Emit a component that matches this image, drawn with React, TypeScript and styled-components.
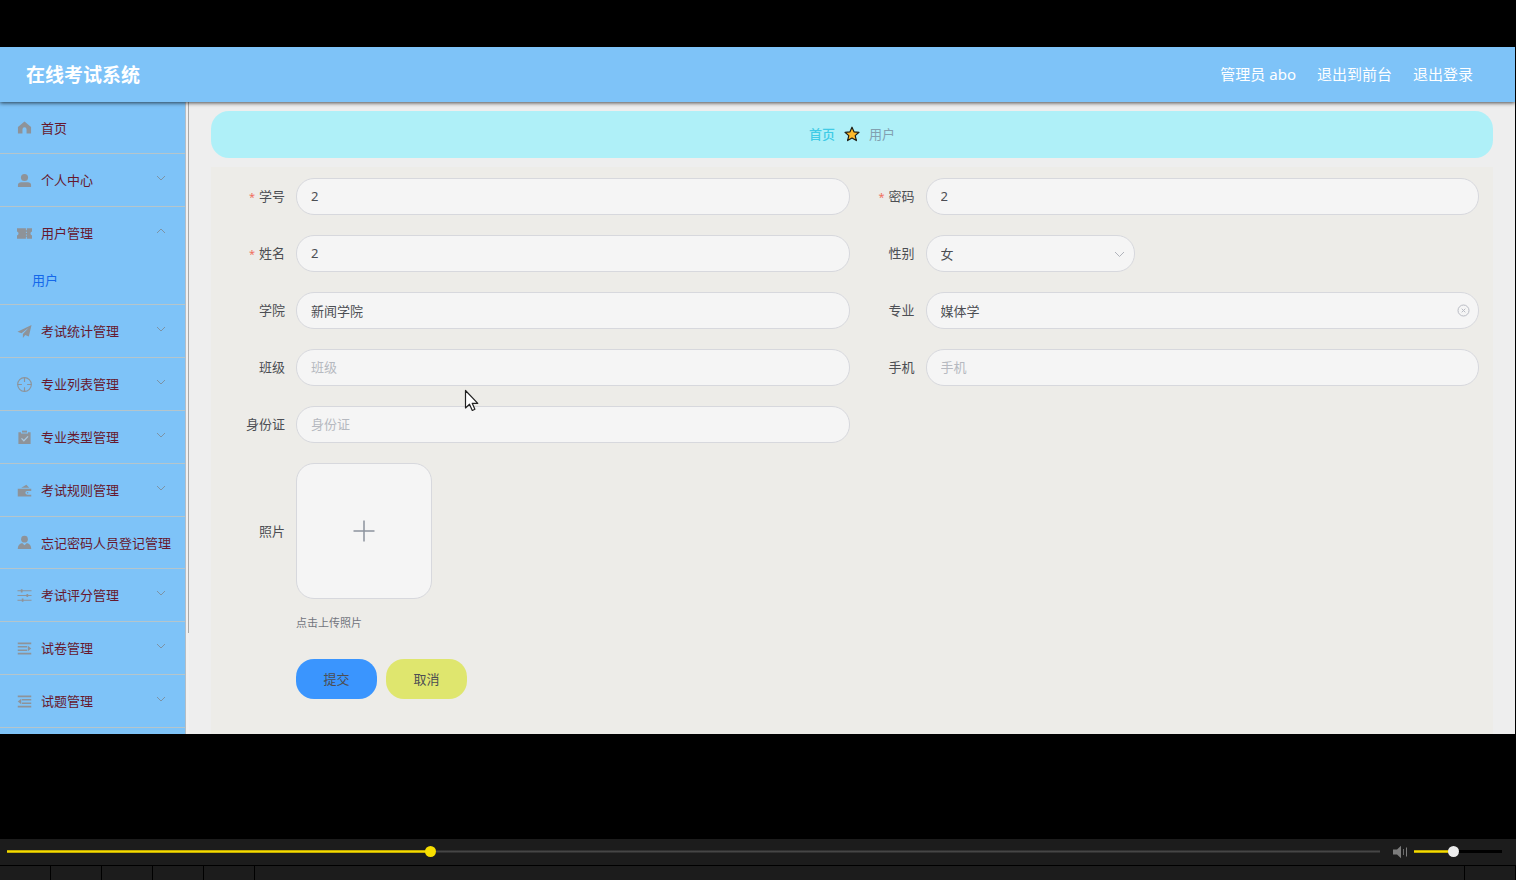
import React, { useState } from "react";
import styled, { createGlobalStyle, css } from "styled-components";

const GlobalStyle = createGlobalStyle`
  *, *::before, *::after { box-sizing: border-box; }
  body {
    margin: 0;
    background: #000;
    font-family: "Noto Sans", "Noto Sans CJK SC", sans-serif;
    font-size: 13px;
    color: #4c4e53;
  }
  button, input, select { font: inherit; color: inherit; }
`;

/* ---------- frame ---------- */

const Page = styled.div`
  display: flex;
  flex-direction: column;
  height: 100vh;
  background: #000;
`;

const Stage = styled.div`
  flex: 1;
  min-height: 0;
  padding: 47px 1px 105px 0;
`;

const Screen = styled.div`
  position: relative;
  display: flex;
  flex-direction: column;
  height: 100%;
  overflow: hidden;
  background: #eeeeee;
`;

const Header = styled.header`
  position: relative;
  z-index: 1;
  display: flex;
  flex: none;
  align-items: center;
  justify-content: space-between;
  height: 55px;
  padding: 0 42px 0 26px;
  background: #7ec3f8;
  box-shadow: 0 1px 4px rgba(0, 0, 0, 0.7);
  color: #fff;
`;

const Brand = styled.h1`
  margin: 0;
  font-size: 19px;
  font-weight: 700;
  line-height: 24px;
`;

const HeaderNav = styled.nav`
  display: flex;
  gap: 21px;
  padding-bottom: 2px;
  font-size: 15px;
  line-height: 20px;
`;

const HeaderLink = styled.a`
  color: #fff;
  text-decoration: none;
`;

const Body = styled.div`
  display: flex;
  flex: 1;
  min-height: 0;
`;

/* ---------- sidebar ---------- */

const Sidebar = styled.nav`
  flex: none;
  width: 185px;
  overflow: hidden;
  background: #7ec3f8;
`;

const Menu = styled.ul`
  margin: 0;
  padding: 0;
  list-style: none;
`;

const MenuItem = styled.li`
  border-bottom: 1px solid #b5c5cb;
`;

const MenuLink = styled.a<{ $leaf: boolean }>`
  display: flex;
  align-items: center;
  height: ${(p) => (p.$leaf ? "51px" : "52px")};
  padding: 0 18px 0 17px;
  color: #66182e;
  line-height: 20px;
  white-space: nowrap;
  text-decoration: none;
`;

const MenuText = styled.span`
  flex: 1;
  margin-left: 9px;
`;

const SubLink = styled.a`
  display: flex;
  align-items: center;
  height: 45px;
  padding: 0 32px 4px;
  color: #1468ea;
  line-height: 20px;
  text-decoration: none;
`;

const ScrollTrack = styled.div`
  flex: none;
  width: 4px;
  border-left: 1px solid #b4bec6;
  background: #f1f0f0;
`;

const ScrollThumb = styled.div`
  width: 1px;
  height: 84%;
  margin-left: auto;
  background: #a9a9a9;
`;

/* ---------- main ---------- */

const Main = styled.main`
  display: flex;
  flex: 1;
  flex-direction: column;
  gap: 9px;
  min-width: 0;
  padding: 9px 22px 0;
`;

const Breadcrumb = styled.nav`
  display: flex;
  flex: none;
  align-items: center;
  justify-content: center;
  gap: 9px;
  height: 47px;
  padding-bottom: 1px;
  border-radius: 18px;
  background: #aff0f8;
  color: #82a0b0;
  line-height: 20px;
`;

const CrumbLink = styled.a`
  color: #3fcbe6;
  font-weight: 500;
  text-decoration: none;
`;

const Panel = styled.form`
  flex: 1;
  padding: 11px 14px 0 9px;
  background: #edece8;
`;

const FieldGrid = styled.div`
  display: grid;
  grid-template-columns: 1fr 1fr;
  row-gap: 20px;
`;

const Field = styled.div`
  display: flex;
  align-items: center;
`;

const FieldLabel = styled.label`
  flex: none;
  width: 76px;
  padding: 0 11px 1px 0;
  line-height: 20px;
  text-align: right;
  white-space: nowrap;
`;

const Required = styled.span`
  margin-right: 4px;
  color: #f0705e;
  font-size: 11px;
`;

const Control = styled.div<{ $narrow?: boolean }>`
  display: grid;
  flex: ${(p) => (p.$narrow ? "0 0 209px" : "1")};
  align-items: center;
  min-width: 0;

  > * { grid-area: 1 / 1; }
  > svg { justify-self: end; margin-right: 9px; pointer-events: none; }
`;

const box = css`
  border: 1px solid #d7d8dd;
  border-radius: 18px;
  background: #f5f5f5;
`;

const TextInput = styled.input`
  ${box}
  width: 100%;
  height: 37px;
  padding: 0 30px 1px 14px;
  outline: none;

  &::placeholder { color: #b6b9c0; opacity: 1; }
`;

const Select = styled.select`
  ${box}
  width: 100%;
  height: 37px;
  padding: 0 30px 0 14px;
  outline: none;
  appearance: none;
`;

const Upload = styled.label`
  ${box}
  display: flex;
  align-items: center;
  justify-content: center;
  width: 136px;
  height: 136px;
  cursor: pointer;
`;

const HiddenFile = styled.input`
  position: absolute;
  width: 1px;
  height: 1px;
  opacity: 0;
`;

const Hint = styled.p`
  margin: 14px 0 0 76px;
  color: #72757d;
  font-size: 11px;
  line-height: 20px;
`;

const Actions = styled.div`
  display: flex;
  gap: 9px;
  margin: 26px 0 0 76px;
`;

const ActionButton = styled.button<{ $color: string }>`
  width: 81px;
  height: 40px;
  padding: 0 0 2px;
  border: 0;
  border-radius: 18px;
  background: ${(p) => p.$color};
`;

const Pointer = styled.svg`
  position: absolute;
  top: 342px;
  left: 464px;
`;

/* ---------- player ---------- */

const Player = styled.footer`
  flex: none;
  background: #1c1c1c;
`;

const SeekRow = styled.div`
  display: flex;
  align-items: center;
  height: 27px;
  padding: 0 14px 1px 7px;
  border-bottom: 1px solid #000;
`;

const Range = styled.input<{ $width?: string; $thumb: string; $rest: string }>`
  flex: ${(p) => (p.$width ? `0 0 ${p.$width}` : "1")};
  min-width: 0;
  height: 13px;
  margin: 0;
  appearance: none;
  background: transparent;

  &::-webkit-slider-runnable-track {
    height: 3px;
    background:
      linear-gradient(#a89300, #f5dc00, #a89300) 0 0 / var(--fill) 100% no-repeat,
      ${(p) => p.$rest};
  }

  &::-webkit-slider-thumb {
    width: 11px;
    height: 11px;
    margin-top: -4px;
    border-radius: 50%;
    background: ${(p) => p.$thumb};
    appearance: none;
  }
`;

const Mute = styled.button`
  display: flex;
  margin: 0 6px 0 12px;
  padding: 0;
  border: 0;
  background: none;
`;

const ToolRow = styled.div`
  display: flex;
  height: 14px;
`;

const ToolCell = styled.div<{ $grow?: boolean }>`
  flex: ${(p) => (p.$grow ? "1" : "0 0 51px")};
  border-right: 1px solid #000;
`;

/* ---------- drawings ---------- */

const glyphs: Record<string, React.ReactNode> = {
  home: <path d="M8 1.5 15 7.5V14.5H10.2V10a2.2 2.2 0 0 0-4.4 0V14.5H1V7.5Z" />,
  user: (
    <>
      <circle cx="8" cy="4.8" r="3.8" />
      <path d="M1 15v-2.2C1 10.800 2.600 9.800 4.500 9.800h7c1.900 0 3.500 1 3.500 3V15Z" />
    </>
  ),
  ticket: (
    <path d="M0 2.500h9.500v2h1v-2H16v3.300a2.300 2.300 0 0 0 0 4.400v3.300h-5.500v-2h-1v2H0v-3.300a2.300 2.300 0 0 0 0-4.400ZM9.500 6v1.500h1V6Zm0 3v1.500h1V9Z" />
  ),
  plane: <path d="M15.500 1 .5 8.200l4.300 1.700L12.500 4 6.300 10.600V15l2.500-3.200 3.800 1.500Z" />,
  aim: (
    <g fill="none" stroke="currentColor" strokeWidth="1.2">
      <circle cx="8" cy="8" r="7.300" />
      <path d="M8 .7v4.500M8 10.800v4.500M.7 8h4.500M10.800 8h4.500" />
    </g>
  ),
  claim: (
    <>
      <path d="M1.500 2.300h2.800v1.400h7.400V2.300h2.800V15h-13Z" />
      <path d="M5.300.7h5.400v2H5.300Z" />
      <path d="m4.800 9 2.500 2.500 4.500-4.700" fill="none" stroke="#a9c8e0" strokeWidth="1.300" />
    </>
  ),
  wallet: (
    <>
      <path d="M.8 6h14.400v2.600h-4.400a1.900 1.900 0 0 0 0 3.800h4.400v2.100H.8Z" />
      <path d="M4.500 5 10 1.800 13 5Z" />
      <circle cx="11.300" cy="10.500" r=".8" />
    </>
  ),
  custom: (
    <>
      <circle cx="8" cy="4.500" r="3.600" />
      <path d="M.8 15c0-3.700 1.700-5.800 4.700-6.500L8 11l2.500-2.500c3 .7 4.700 2.800 4.700 6.500Z" />
    </>
  ),
  operation: (
    <g fill="none" stroke="currentColor" strokeWidth="1.100">
      <path d="M.5 3h15M.5 8h15M.5 13h15" />
      <path d="M5 1.300v3.400M11 6.300v3.400M6 11.300v3.400" strokeWidth="1.800" />
    </g>
  ),
  unfold: (
    <g fill="none" stroke="currentColor" strokeWidth="1.700">
      <path d="M.8 2.500h14.400M.8 6.200h10M.8 9.800h10M.8 13.500h14.400" />
      <path d="M11.500 5 15.200 8 11.500 11Z" fill="currentColor" stroke="none" />
    </g>
  ),
  fold: (
    <g fill="none" stroke="currentColor" strokeWidth="1.700">
      <path d="M.8 2.500h14.400M5.200 6.200h10M5.200 9.800h10M.8 13.500h14.400" />
      <path d="M4.500 5 .8 8l3.700 3Z" fill="currentColor" stroke="none" />
    </g>
  ),
};

const IconSvg = styled.svg`
  flex: none;
  color: #8e9399;
`;

const MenuIcon = ({ name }: { name: string }) => (
  <IconSvg width="15" height="15" viewBox="0 0 16 16" fill="currentColor" aria-hidden="true">
    {glyphs[name]}
  </IconSvg>
);

const ArrowSvg = styled.svg`
  flex: none;
  margin-bottom: 4px;
`;

const Chevron = ({ up }: { up?: boolean }) => (
  <ArrowSvg width="12" height="8" viewBox="0 0 12 8" fill="none" stroke="#7c93a6" aria-hidden="true">
    <path d={up ? "M2 6 6 2l4 4" : "M2 2l4 4 4-4"} />
  </ArrowSvg>
);

/* ---------- data ---------- */

type Entry = { icon: string; text: string; arrow?: "up" | "down"; child?: string };

const menu: Entry[] = [
  { icon: "home", text: "首页" },
  { icon: "user", text: "个人中心", arrow: "down" },
  { icon: "ticket", text: "用户管理", arrow: "up", child: "用户" },
  { icon: "plane", text: "考试统计管理", arrow: "down" },
  { icon: "aim", text: "专业列表管理", arrow: "down" },
  { icon: "claim", text: "专业类型管理", arrow: "down" },
  { icon: "wallet", text: "考试规则管理", arrow: "down" },
  { icon: "custom", text: "忘记密码人员登记管理" },
  { icon: "operation", text: "考试评分管理", arrow: "down" },
  { icon: "unfold", text: "试卷管理", arrow: "down" },
  { icon: "fold", text: "试题管理", arrow: "down" },
];

type TextFieldProps = {
  id: string;
  label: string;
  value?: string;
  required?: boolean;
  clearable?: boolean;
};

const TextField = ({ id, label, value = "", required, clearable }: TextFieldProps) => (
  <Field>
    <FieldLabel htmlFor={id}>
      {required && <Required>*</Required>}
      {label}
    </FieldLabel>
    <Control>
      <TextInput id={id} defaultValue={value} placeholder={label} />
      {clearable && (
        <svg width="13" height="13" viewBox="0 0 13 13" fill="none" stroke="#b9bcc4" aria-hidden="true">
          <circle cx="6.500" cy="6.500" r="5.500" />
          <path d="m4.700 4.700 3.600 3.600M8.300 4.700 4.700 8.300" />
        </svg>
      )}
    </Control>
  </Field>
);

export default function App() {
  const [seek, setSeek] = useState(307);
  const [volume, setVolume] = useState(44);

  return (
    <Page>
      <GlobalStyle />
      <Stage>
        <Screen>
          <Header>
            <Brand>在线考试系统</Brand>
            <HeaderNav>
              <span>管理员 abo</span>
              <HeaderLink href="#front">退出到前台</HeaderLink>
              <HeaderLink href="#logout">退出登录</HeaderLink>
            </HeaderNav>
          </Header>
          <Body>
            <Sidebar>
              <Menu>
                {menu.map((item) => (
                  <MenuItem key={item.text}>
                    <MenuLink href="#menu" $leaf={!item.arrow}>
                      <MenuIcon name={item.icon} />
                      <MenuText>{item.text}</MenuText>
                      {item.arrow && <Chevron up={item.arrow === "up"} />}
                    </MenuLink>
                    {item.child && <SubLink href="#user">{item.child}</SubLink>}
                  </MenuItem>
                ))}
              </Menu>
            </Sidebar>
            <ScrollTrack>
              <ScrollThumb />
            </ScrollTrack>
            <Main>
              <Breadcrumb>
                <CrumbLink href="#home">首页</CrumbLink>
                <svg width="16" height="16" viewBox="0 0 16 16" aria-hidden="true">
                  <path
                    d="M8 1.200 10 5.800l5 .5-3.800 3.300 1.200 5L8 12l-4.400 2.600 1.200-5L1 6.300l5-.5Z"
                    fill="#fdb92b"
                    stroke="#1c1c14"
                    strokeWidth="1.200"
                    strokeLinejoin="round"
                  />
                </svg>
                <span>用户</span>
              </Breadcrumb>
              <Panel onSubmit={(e) => e.preventDefault()}>
                <FieldGrid>
                  <TextField id="number" label="学号" value="2" required />
                  <TextField id="password" label="密码" value="2" required />
                  <TextField id="name" label="姓名" value="2" required />
                  <Field>
                    <FieldLabel htmlFor="gender">性别</FieldLabel>
                    <Control $narrow>
                      <Select id="gender" defaultValue="女">
                        <option>女</option>
                        <option>男</option>
                      </Select>
                      <svg width="13" height="8" viewBox="0 0 13 8" fill="none" stroke="#b0b3bb" aria-hidden="true">
                        <path d="m2 2 4.500 4.500L11 2" />
                      </svg>
                    </Control>
                  </Field>
                  <TextField id="college" label="学院" value="新闻学院" />
                  <TextField id="major" label="专业" value="媒体学" clearable />
                  <TextField id="class" label="班级" />
                  <TextField id="phone" label="手机" />
                  <TextField id="idcard" label="身份证" />
                  <span />
                  <Field>
                    <FieldLabel htmlFor="photo">照片</FieldLabel>
                    <Upload>
                      <HiddenFile id="photo" type="file" />
                      <svg width="22" height="22" viewBox="0 0 22 22" fill="none" stroke="#8c939d" strokeWidth="1.500" aria-hidden="true">
                        <path d="M11 .5v21M.5 11h21" />
                      </svg>
                    </Upload>
                  </Field>
                </FieldGrid>
                <Hint>点击上传照片</Hint>
                <Actions>
                  <ActionButton type="submit" $color="#3a95fe">提交</ActionButton>
                  <ActionButton type="button" $color="#dfe66e">取消</ActionButton>
                </Actions>
              </Panel>
            </Main>
          </Body>
          <Pointer width="16" height="24" viewBox="0 0 16 24" aria-hidden="true">
            <path
              d="M1.500 1.500v17.500l4-3.800 2.800 6.300 2.600-1.200-2.700-6h5.600Z"
              fill="#fff"
              stroke="#222"
              strokeWidth="1.200"
              strokeLinejoin="round"
            />
          </Pointer>
        </Screen>
      </Stage>
      <Player>
        <SeekRow>
          <Range
            type="range"
            aria-label="播放进度"
            min={0}
            max={1000}
            value={seek}
            onChange={(e) => setSeek(Number(e.target.value))}
            $thumb="#f8df00"
            $rest="linear-gradient(#262626, #464646, #262626)"
            style={{ "--fill": `${seek / 10}%` } as React.CSSProperties}
          />
          <Mute type="button" aria-label="静音">
            <svg width="16" height="14" viewBox="0 0 16 14" aria-hidden="true">
              <path d="M1 4.500h4L9 .8v12.400L5 9.500H1Z" fill="#7c7c7c" />
              <path d="M11.500 4v6" stroke="#6a6a6a" />
              <path d="M14.500 2.500v9" stroke="#7c7c7c" />
            </svg>
          </Mute>
          <Range
            type="range"
            aria-label="音量"
            min={0}
            max={100}
            value={volume}
            onChange={(e) => setVolume(Number(e.target.value))}
            $width="88px"
            $thumb="#ececec"
            $rest="#000"
            style={{ "--fill": `${volume}%` } as React.CSSProperties}
          />
        </SeekRow>
        <ToolRow>
          <ToolCell />
          <ToolCell />
          <ToolCell />
          <ToolCell />
          <ToolCell />
          <ToolCell $grow />
          <ToolCell />
        </ToolRow>
      </Player>
    </Page>
  );
}
